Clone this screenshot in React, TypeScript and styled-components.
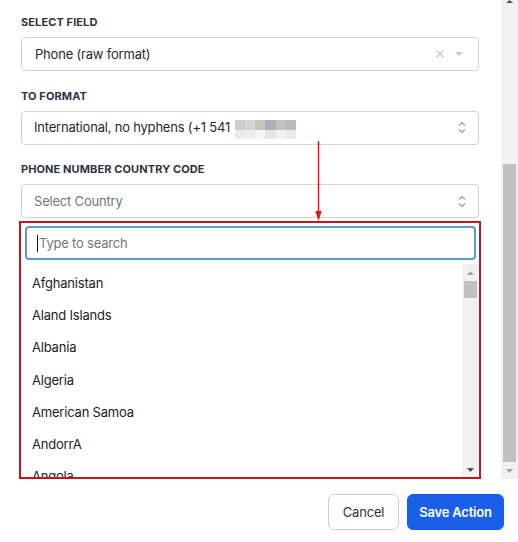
import React from "react";
import styled, { createGlobalStyle } from "styled-components";

const Global = createGlobalStyle`
  html, body { margin: 0; padding: 0; background: #ffffff; }
  body { font-family: Inter, "Noto Sans", sans-serif; color: #2a2a2a; letter-spacing: -0.2px; }
  * { box-sizing: border-box; }
`;

const Page = styled.div`
  width: 518px;
  height: 542px;
  display: flex;
  flex-direction: column;
  overflow: hidden;
`;

const ScrollRegion = styled.div`
  height: 479px;
  display: flex;
  flex-direction: row;
`;

const Content = styled.div`
  position: relative;
  flex: 1;
  display: flex;
  flex-direction: column;
  gap: 16.5px;
  padding: 14px 22px 0 21px;
  overflow: hidden;
`;

const Field = styled.div`
  display: flex;
  flex-direction: column;
`;

const Label = styled.div`
  font-size: 11px;
  line-height: 14px;
  font-weight: 700;
  letter-spacing: 0.1px;
  color: #2f3540;
  text-transform: uppercase;
  margin-top: 1px;
  margin-bottom: 8px;
`;

const SelectBox = styled.div<{ $inset?: number }>`
  height: 34px;
  border: 1px solid #d3d3d3;
  border-radius: 4px;
  background: #fff;
  display: flex;
  align-items: center;
  padding: 0 ${(p) => p.$inset ?? 12}px 0 ${(p) => (p.$inset ? 13 : 12)}px;
  font-size: 13px;
  color: #2a2a2a;
`;

const Value = styled.span<{ $placeholder?: boolean }>`
  flex: 1;
  display: flex;
  align-items: center;
  white-space: nowrap;
  margin-top: -1px;
  color: ${(p) => (p.$placeholder ? "#767676" : "#2a2a2a")};
`;

const Icons = styled.span`
  display: flex;
  align-items: center;
  gap: 11px;
`;

const Redaction = styled.span`
  display: grid;
  grid-template-columns: repeat(6, 10.3px);
  grid-template-rows: 10px 9px;
  margin-left: 1px;
  margin-top: 4px;
`;

const Pixel = styled.span<{ $c: string }>`
  background: ${(p) => p.$c};
`;

const Panel = styled.div`
  margin: 3px -2px 0;
  height: 258px;
  border: 2px solid #c4161c;
  display: flex;
  flex-direction: column;
  background: #fff;
`;

const SearchWrap = styled.div`
  padding: 3px 3px 0 4px;
`;

const SearchBox = styled.div`
  height: 34px;
  border: 2px solid #5b9dca;
  border-radius: 4px;
  display: flex;
  align-items: center;
  padding-left: 10px;
  font-size: 13px;
  color: #767676;
`;

const Caret = styled.span`
  width: 1px;
  height: 17px;
  background: #111;
  margin-right: 1px;
`;

const ListArea = styled.div`
  margin-top: 4px;
  height: 213px;
  display: flex;
`;

const List = styled.div`
  flex: 1;
  overflow: hidden;
  padding-top: 3px;
`;

const Item = styled.div`
  padding: 7px 11px;
  line-height: 18.2px;
  font-size: 13px;
  color: #222;
  white-space: nowrap;
`;

const Track = styled.div<{ $w: number; $mr?: number }>`
  width: ${(p) => p.$w}px;
  margin-right: ${(p) => p.$mr ?? 0}px;
  background: #f1f1f1;
  display: flex;
  flex-direction: column;
  align-items: stretch;
`;

const ArrowSlot = styled.div<{ $h: number; $align?: string }>`
  height: ${(p) => p.$h}px;
  display: flex;
  justify-content: center;
  align-items: ${(p) => p.$align ?? "center"};
`;

const Thumb = styled.div<{ $top: number; $h: number; $ml: number; $mr: number }>`
  margin-top: ${(p) => p.$top}px;
  height: ${(p) => p.$h}px;
  margin-left: ${(p) => p.$ml}px;
  margin-right: ${(p) => p.$mr}px;
  background: #c1c1c1;
`;

const Spacer = styled.div`
  flex: 1;
`;

const Pointer = styled.svg`
  position: absolute;
  left: 0;
  top: 0;
  pointer-events: none;
`;

const Footer = styled.div`
  display: flex;
  justify-content: flex-end;
  gap: 8px;
  padding: 15px 14px 0 0;
`;

const Button = styled.button<{ $primary?: boolean }>`
  height: 36px;
  width: ${(p) => (p.$primary ? 97 : 71)}px;
  padding: 0;
  border-radius: 6px;
  font-family: Inter, "Noto Sans", sans-serif;
  font-size: 13px;
  letter-spacing: -0.2px;
  font-weight: ${(p) => (p.$primary ? 600 : 400)};
  border: 1px solid ${(p) => (p.$primary ? "#1a5fe8" : "#d0d0d0")};
  background: ${(p) => (p.$primary ? "#1a5fe8" : "#ffffff")};
  color: ${(p) => (p.$primary ? "#ffffff" : "#333333")};
  cursor: pointer;
`;

const Tri = ({ up, color, w = 7, h = 4 }: { up?: boolean; color: string; w?: number; h?: number }) => (
  <svg width={w} height={h} viewBox={`0 0 ${w} ${h}`}>
    <polygon points={up ? `0,${h} ${w},${h} ${w / 2},0` : `0,0 ${w},0 ${w / 2},${h}`} fill={color} />
  </svg>
);

const ClearIcon = () => (
  <svg width="8" height="8" viewBox="0 0 8 8">
    <path d="M0.5 0.5 L7.5 7.5 M7.5 0.5 L0.5 7.5" stroke="#c8c8c8" strokeWidth="1.3" />
  </svg>
);

const UpDown = () => (
  <svg width="8" height="13" viewBox="0 0 8 13">
    <path d="M1 4.5 L4 1.5 L7 4.5 M1 8.5 L4 11.5 L7 8.5" stroke="#9a9a9a" strokeWidth="1.1" fill="none" />
  </svg>
);

const pixels = [
  "#cfccc9", "#d6d4d2", "#c9c4c0", "#afaeb6", "#c8c2bf", "#b4bdca",
  "#ececec", "#eeeeee", "#f6f6f6", "#e7e5e4", "#f0f0f0", "#e8ebee",
];

const countries = [
  "Afghanistan",
  "Aland Islands",
  "Albania",
  "Algeria",
  "American Samoa",
  "AndorrA",
  "Angola",
];

export default function App() {
  return (
    <Page>
      <Global />
      <ScrollRegion>
        <Content>
          <Field>
            <Label>Select Field</Label>
            <SelectBox $inset={15}>
              <Value>Phone (raw format)</Value>
              <Icons>
                <ClearIcon />
                <Tri color="#c8c8c8" w={8} h={4} />
              </Icons>
            </SelectBox>
          </Field>
          <Field>
            <Label>To Format</Label>
            <SelectBox>
              <Value>
                International, no hyphens (+1 541&nbsp;
                <Redaction>
                  {pixels.map((c, i) => (
                    <Pixel key={i} $c={c} />
                  ))}
                </Redaction>
              </Value>
              <UpDown />
            </SelectBox>
          </Field>
          <Field>
            <Label>Phone Number Country Code</Label>
            <SelectBox>
              <Value $placeholder>Select Country</Value>
              <UpDown />
            </SelectBox>
            <Panel>
              <SearchWrap>
                <SearchBox>
                  <Caret />
                  Type to search
                </SearchBox>
              </SearchWrap>
              <ListArea>
                <List>
                  {countries.map((c) => (
                    <Item key={c}>{c}</Item>
                  ))}
                </List>
                <Track $w={16} $mr={1}>
                  <ArrowSlot $h={17}>
                    <Tri up color="#a3a3a3" />
                  </ArrowSlot>
                  <Thumb $top={0} $h={17} $ml={2} $mr={1} />
                  <Spacer />
                  <ArrowSlot $h={15}>
                    <Tri color="#505050" />
                  </ArrowSlot>
                </Track>
              </ListArea>
            </Panel>
          </Field>
          <Pointer width="501" height="479" viewBox="0 0 501 479">
            <line x1="318.5" y1="141" x2="318.5" y2="212" stroke="#e3141b" strokeWidth="1.5" />
            <polygon points="315.3,211 321.7,211 318.5,221" fill="#e3141b" />
          </Pointer>
        </Content>
        <Track $w={17}>
          <ArrowSlot $h={3} $align="flex-end">
            <Tri up color="#505050" w={7} h={3} />
          </ArrowSlot>
          <Thumb $top={161} $h={298} $ml={2} $mr={2} />
          <ArrowSlot $h={17}>
            <Tri color="#a3a3a3" />
          </ArrowSlot>
        </Track>
      </ScrollRegion>
      <Footer>
        <Button>Cancel</Button>
        <Button $primary>Save Action</Button>
      </Footer>
    </Page>
  );
}
